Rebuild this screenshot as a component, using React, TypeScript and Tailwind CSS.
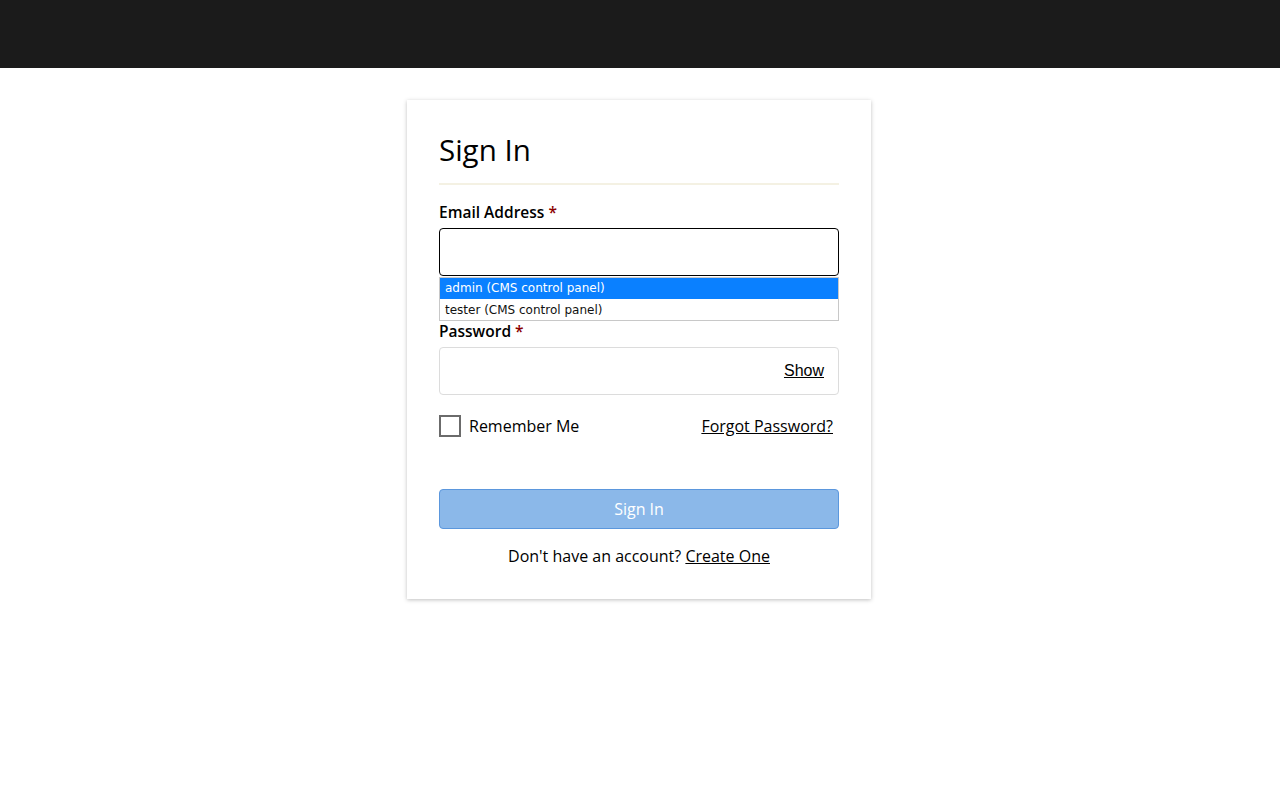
import React from "react";

export default function App() {
  return (
    <div className="min-h-[800px] bg-white" style={{ fontFamily: '"Open Sans", sans-serif' }}>
      <div className="h-[68px] bg-[#1b1b1b]" />
      <div className="flex justify-center pt-[32px]">
        <div className="mr-[2px] w-[464px] bg-white px-[32px] pt-[30px] pb-[31px] shadow-[0_1px_4px_rgba(0,0,0,0.25)]">
          <h1 className="text-[29.5px] leading-[40px] text-black font-normal">Sign In</h1>
          <div className="mt-[13px] h-[2px] bg-[#f4f1e3]" />
          <label className="mt-[15px] mb-[4px] block text-[15.5px] leading-[24px] font-semibold text-black">
            Email Address <span className="text-[#8b0000]">*</span>
          </label>
          <div className="relative">
            <input
              className="block h-[48px] w-full rounded-[4px] border border-black bg-white px-3 outline-none"
              type="text"
            />
            <div
              className="absolute left-0 right-0 top-[49px] z-10 border border-[#c8c8c8] bg-white text-[12px] leading-[21px]"
              style={{ fontFamily: '"DejaVu Sans", Verdana, sans-serif' }}
            >
              <div className="bg-[#0a80ff] px-[5px] text-white">admin (CMS control panel)</div>
              <div className="px-[5px] pt-[1px] leading-[20px] text-[#111]">tester (CMS control panel)</div>
            </div>
          </div>
          <label className="mt-[43px] mb-[4px] block text-[15.5px] leading-[24px] font-semibold text-black">
            Password <span className="text-[#8b0000]">*</span>
          </label>
          <div className="flex h-[48px] items-center justify-end rounded-[4px] border border-[#dcdcdc] bg-white pr-[14px]">
            <span
              className="text-[16px] text-black underline"
              style={{ fontFamily: '"Liberation Sans", Arial, sans-serif' }}
            >
              Show
            </span>
          </div>
          <div className="mt-[19px] flex items-center justify-between pr-[6px]">
            <div className="flex items-center">
              <div className="h-[22px] w-[22px] border-2 border-[#6b6b6b] bg-white" />
              <span className="ml-[8px] text-[16px] leading-[24px] text-black">Remember Me</span>
            </div>
            <span className="text-[16px] leading-[24px] text-black underline">Forgot Password?</span>
          </div>
          <button className="mt-[51px] flex h-[40px] w-full items-center justify-center rounded-[4px] border border-[#5b97dd] bg-[#8bb8e9] text-[16px] text-white">
            Sign In
          </button>
          <p className="mt-[15px] text-center text-[16px] leading-[24px] text-black">
            Don't have an account? <span className="underline">Create One</span>
          </p>
        </div>
      </div>
    </div>
  );
}
